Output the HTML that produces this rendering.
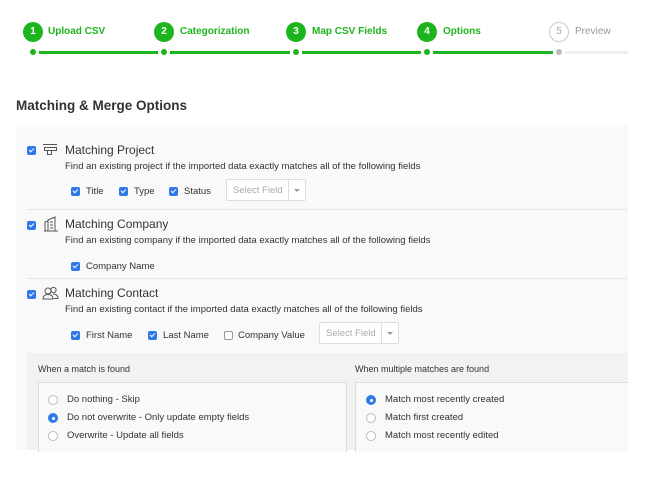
<!DOCTYPE html>
<html><head><meta charset="utf-8"><style>
*{margin:0;padding:0;box-sizing:border-box}
body{width:654px;height:479px;background:#fff;font-family:"Liberation Sans",sans-serif;color:#333;position:relative;overflow:hidden}
.a{position:absolute;white-space:nowrap}
.c{position:absolute;width:20px;height:20px;border-radius:50%;background:#1db51d;color:#fff;font-size:10px;font-weight:bold;text-align:center;line-height:20px}
.l{position:absolute;font-size:10px;color:#1db51d;font-weight:bold;top:26px}
.d{position:absolute;width:6px;height:6px;border-radius:50%;background:#1db51d;top:49px}
.ln{position:absolute;height:3px;background:#1db51d;top:50.5px}
.cb{position:absolute;width:9px;height:9px;border-radius:2px;background:#2f7ae8}
.cb:after{content:"";position:absolute;left:3px;top:1px;width:2px;height:4px;border:solid #fff;border-width:0 1.3px 1.3px 0;transform:rotate(45deg)}
.ub{position:absolute;width:9px;height:9px;border-radius:2px;border:1px solid #999;background:#fff}
.t{font-size:9.5px;color:#333}
.h{font-size:12px;color:#333}
.sel{position:absolute;width:80px;height:22px;border:1px solid #ddd;background:#fff;border-radius:2px;font-size:9.5px;color:#aaa;padding:5px 0 0 6px}
.sel:after{content:"";position:absolute;right:0;top:0;width:16px;height:20px;border-left:1px solid #ddd}
.sel b{position:absolute;right:5px;top:9px;border:3px solid transparent;border-top:3px solid #999;z-index:2}
.r{position:absolute;width:10px;height:10px;border-radius:50%;border:1px solid #bbb;background:#fff}
.r.on{background:#2f7ae8;border-color:#2f7ae8}
.r.on:after{content:"";position:absolute;left:2.5px;top:2.5px;width:3px;height:3px;border-radius:50%;background:#fff}
</style></head><body>
<div class="c" style="left:23px;top:22px">1</div><div class="l" style="left:48px">Upload CSV</div>
<div class="c" style="left:154px;top:22px">2</div><div class="l" style="left:180px">Categorization</div>
<div class="c" style="left:286px;top:22px">3</div><div class="l" style="left:312px">Map CSV Fields</div>
<div class="c" style="left:417px;top:22px">4</div><div class="l" style="left:443px">Options</div>
<div class="c" style="left:549px;top:22px;background:#fff;border:1px solid #ccc;color:#aaa;font-weight:normal;line-height:18px">5</div><div class="l" style="left:575px;color:#999;font-weight:normal">Preview</div>
<div class="d" style="left:30px"></div><div class="ln" style="left:39px;width:119px"></div>
<div class="d" style="left:161px"></div><div class="ln" style="left:170px;width:120px"></div>
<div class="d" style="left:293px"></div><div class="ln" style="left:302px;width:119px"></div>
<div class="d" style="left:424px"></div><div class="ln" style="left:433px;width:120px"></div>
<div class="d" style="left:556px;background:#bbb"></div><div class="ln" style="left:565px;width:63px;background:#eee"></div>
<div class="a" style="left:16px;top:98px;font-size:13.5px;font-weight:bold;color:#333">Matching &amp; Merge Options</div>
<div class="a" style="left:16px;top:125px;width:612px;height:325px;background:#f9f9f9"></div>
<div class="a" style="left:26px;top:209px;width:602px;height:1px;background:#e6e6e6"></div>
<div class="a" style="left:26px;top:278px;width:602px;height:1px;background:#e6e6e6"></div>
<div class="cb" style="left:27px;top:146px"></div>
<svg class="a" style="left:42px;top:143px" width="16" height="14" fill="none" stroke="#555" stroke-width="1"><path d="M1 1.5h14M2.5 4.5h12v3h-12zM5.5 7.5v4h4v-4"/></svg>
<div class="a h" style="left:65px;top:143px">Matching Project</div>
<div class="a t" style="left:65px;top:161px">Find an existing project if the imported data exactly matches all of the following fields</div>
<div class="cb" style="left:71px;top:187px"></div><div class="a t" style="left:86px;top:186px">Title</div>
<div class="cb" style="left:119px;top:187px"></div><div class="a t" style="left:134px;top:186px">Type</div>
<div class="cb" style="left:169px;top:187px"></div><div class="a t" style="left:184px;top:186px">Status</div>
<div class="sel" style="left:226px;top:179px">Select Field<b></b></div>
<div class="cb" style="left:27px;top:221px"></div>
<svg class="a" style="left:43px;top:216px" width="16" height="16" fill="none" stroke="#555" stroke-width="1"><path d="M1 15h14M2 15V6l3-1M5 15V4l7-3v14M12 15V2M7 6h3M7 9h3M7 12h3"/></svg>
<div class="a h" style="left:65px;top:217px">Matching Company</div>
<div class="a t" style="left:65px;top:235px">Find an existing company if the imported data exactly matches all of the following fields</div>
<div class="cb" style="left:71px;top:262px"></div><div class="a t" style="left:86px;top:261px">Company Name</div>
<div class="cb" style="left:27px;top:290px"></div>
<svg class="a" style="left:42px;top:286px" width="17" height="14" fill="none" stroke="#555" stroke-width="1"><circle cx="6" cy="5" r="3"/><circle cx="11.5" cy="4" r="2.6"/><path d="M1 13c0-3 2-4.5 5-4.5s5 1.5 5 4.5zM11 8c3 0 5 1.5 5 4.5h-4"/></svg>
<div class="a h" style="left:65px;top:286px">Matching Contact</div>
<div class="a t" style="left:65px;top:304px">Find an existing contact if the imported data exactly matches all of the following fields</div>
<div class="cb" style="left:71px;top:331px"></div><div class="a t" style="left:86px;top:330px">First Name</div>
<div class="cb" style="left:148px;top:331px"></div><div class="a t" style="left:163px;top:330px">Last Name</div>
<div class="ub" style="left:224px;top:331px"></div><div class="a t" style="left:238px;top:330px">Company Value</div>
<div class="sel" style="left:319px;top:322px">Select Field<b></b></div>
<div class="a" style="left:27px;top:353px;width:601px;height:97px;background:#f2f2f2"></div>
<div class="a t" style="left:38px;top:364px;font-size:9px">When a match is found</div>
<div class="a t" style="left:355px;top:364px;font-size:9px">When multiple matches are found</div>
<div class="a" style="left:38px;top:382px;width:309px;height:70px;background:#f9f9f9;border:1px solid #ddd;border-bottom:none"></div>
<div class="a" style="left:355px;top:382px;width:273px;height:70px;background:#f9f9f9;border:1px solid #ddd;border-bottom:none;border-right:none"></div>
<div class="r" style="left:48px;top:395px"></div><div class="a t" style="left:67px;top:394px">Do nothing - Skip</div>
<div class="r on" style="left:48px;top:413px"></div><div class="a t" style="left:67px;top:412px">Do not overwrite - Only update empty fields</div>
<div class="r" style="left:48px;top:431px"></div><div class="a t" style="left:67px;top:430px">Overwrite - Update all fields</div>
<div class="r on" style="left:366px;top:395px"></div><div class="a t" style="left:385px;top:394px">Match most recently created</div>
<div class="r" style="left:366px;top:413px"></div><div class="a t" style="left:385px;top:412px">Match first created</div>
<div class="r" style="left:366px;top:431px"></div><div class="a t" style="left:385px;top:430px">Match most recently edited</div>
</body></html>
